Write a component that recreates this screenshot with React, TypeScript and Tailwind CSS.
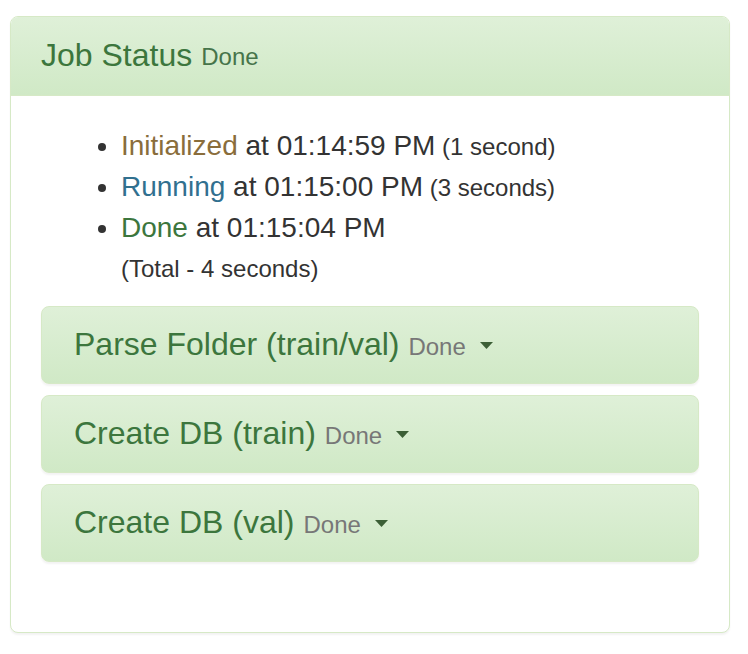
const steps = [
  { label: "Initialized", color: "text-[#8a6d3b]", time: "01:14:59 PM", took: "(1 second)" },
  { label: "Running", color: "text-[#31708f]", time: "01:15:00 PM", took: "(3 seconds)" },
  { label: "Done", color: "text-[#3c763d]", time: "01:15:04 PM", took: null },
];

const tasks = ["Parse Folder (train/val)", "Create DB (train)", "Create DB (val)"];

const Caret = () => (
  <svg width="13" height="7" viewBox="0 0 13 7" className="ml-[14px] inline-block">
    <path d="M0 0 H13 L6.5 7 Z" fill="#3c5f36" />
  </svg>
);

const App = () => {
  return (
    <div className="w-[748px] h-[654px] bg-white pt-[16px] pl-[10px] font-['Liberation_Sans',Arial,sans-serif] text-[#333]">
      {/* Job status panel */}
      <div className="w-[720px] border border-[#d6e9c6] rounded-[8px] bg-white shadow-[0_2px_2px_rgba(0,0,0,0.05)]">
        <div className="h-[79px] flex items-center px-[30px] rounded-t-[7px] bg-gradient-to-b from-[#dff0d8] to-[#d0e9c6] border-b border-[#d6e9c6] text-[#3c763d]">
          <span className="text-[32px] leading-[1.1]">Job Status</span>
          <span className="text-[24px] leading-[1.1] ml-[9px] mt-[3px] text-[#46744a]">Done</span>
        </div>

        <div className="p-[30px]">
          <ul className="list-disc pl-[80px] mb-[17px] text-[28px] leading-[40px]">
            {steps.map((s) => (
              <li key={s.label}>
                <span className={s.color}>{s.label}</span> at {s.time}
                {s.took && <span className="text-[24px]"> {s.took}</span>}
                {!s.took && (
                  <>
                    <br />
                    <span className="text-[24px]">(Total - 4 seconds)</span>
                  </>
                )}
              </li>
            ))}
          </ul>

          {/* Sub tasks */}
          <div className="flex flex-col gap-[11px] mb-[40px]">
            {tasks.map((t) => (
              <div
                key={t}
                className="h-[78px] flex items-center px-[32px] rounded-[8px] border border-[#d6e9c6] bg-gradient-to-b from-[#dff0d8] to-[#d0e9c6] shadow-[0_2px_2px_rgba(0,0,0,0.05)]"
              >
                <span className="text-[32px] leading-[1.1] text-[#3c763d]">{t}</span>
                <span className="text-[24px] leading-[1.1] ml-[9px] mt-[4px] text-[#777]">Done</span>
                <Caret />
              </div>
            ))}
          </div>
        </div>
      </div>
    </div>
  );
};

export default App;
